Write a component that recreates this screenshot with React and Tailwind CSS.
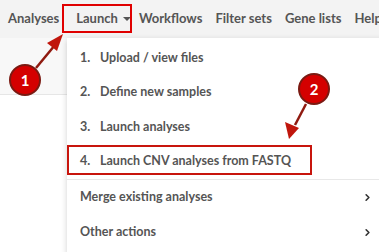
import { ChevronRight } from "lucide-react";

const navItems = ["Analyses", "Launch", "Workflows", "Filter sets", "Gene lists", "Help"];

const launchItems = [
  { n: "1.", label: "Upload / view files" },
  { n: "2.", label: "Define new samples" },
  { n: "3.", label: "Launch analyses" },
  { n: "4.", label: "Launch CNV analyses from FASTQ" },
];

function Badge({ n, className }) {
  return (
    <div
      className={`absolute grid h-[32px] w-[32px] place-items-center rounded-full border-2 border-[#7a1a12] bg-[#d40000] text-[15px] font-bold text-white ${className}`}
    >
      {n}
    </div>
  );
}

export default function App() {
  return (
    <div className="relative h-[252px] w-[379px] overflow-hidden bg-white font-['Lato','Noto_Sans',sans-serif] text-[#555]">
      {/* top nav */}
      <div className="flex h-[38px] items-center gap-[13px] bg-[#f3f3f3] pl-[8px] text-[13px] font-bold">
        {navItems.map((item) => (
          <span key={item} className={`flex items-center whitespace-nowrap ${item === "Launch" ? "ml-[4px] mr-[-5px]" : ""}`}>
            {item}
            {item === "Launch" && (
              <span className="ml-[5px] inline-block h-0 w-0 border-x-[4px] border-t-[4px] border-x-transparent border-t-[#555]" />
            )}
          </span>
        ))}
      </div>
      <div className="h-[57px] border-b border-[#e6e6e6] bg-[#f8f8f8]" />

      {/* dropdown */}
      <div className="absolute left-[67px] top-[38px] w-[330px] bg-white pt-[3px] text-[12.5px] font-bold shadow-[0_2px_6px_rgba(0,0,0,0.18)]">
        {launchItems.map((it) => (
          <div key={it.n} className="flex h-[34.5px] items-center pl-[13px]">
            <span className="w-[20px]">{it.n}</span>
            <span>{it.label}</span>
          </div>
        ))}
        <div className="border-t border-[#e8e8e8]" />
        <div className="flex h-[35px] items-center justify-between pl-[13px] pr-[24px]">
          <span>Merge existing analyses</span>
          <ChevronRight className="h-[11px] w-[11px] text-[#333]" strokeWidth={3.5} />
        </div>
        <div className="flex h-[35px] items-center justify-between pl-[13px] pr-[24px]">
          <span>Other actions</span>
          <ChevronRight className="h-[11px] w-[11px] text-[#333]" strokeWidth={3.5} />
        </div>
        <div className="h-[4px]" />
      </div>

      {/* annotation boxes */}
      <div className="absolute left-[62px] top-[4px] h-[29px] w-[70px] border-2 border-[#e00000]" />
      <div className="absolute left-[67px] top-[145px] h-[30px] w-[245px] border-2 border-[#c8150d]" />

      {/* arrows */}
      <svg className="absolute left-0 top-0" width="379" height="252" viewBox="0 0 379 252">
        <line x1="36" y1="68" x2="55" y2="45" stroke="#8f1a10" strokeWidth="2.5" />
        <path d="M63,34 L47,43 L57,51 z" fill="#c0160c" />
        <line x1="306" y1="104" x2="295" y2="125" stroke="#8f1a10" strokeWidth="2.5" />
        <path d="M289,139 L285,122 L299,128 z" fill="#c0160c" />
      </svg>

      <Badge n="1" className="left-[9px] top-[64px]" />
      <Badge n="2" className="left-[298px] top-[73px]" />
    </div>
  );
}
